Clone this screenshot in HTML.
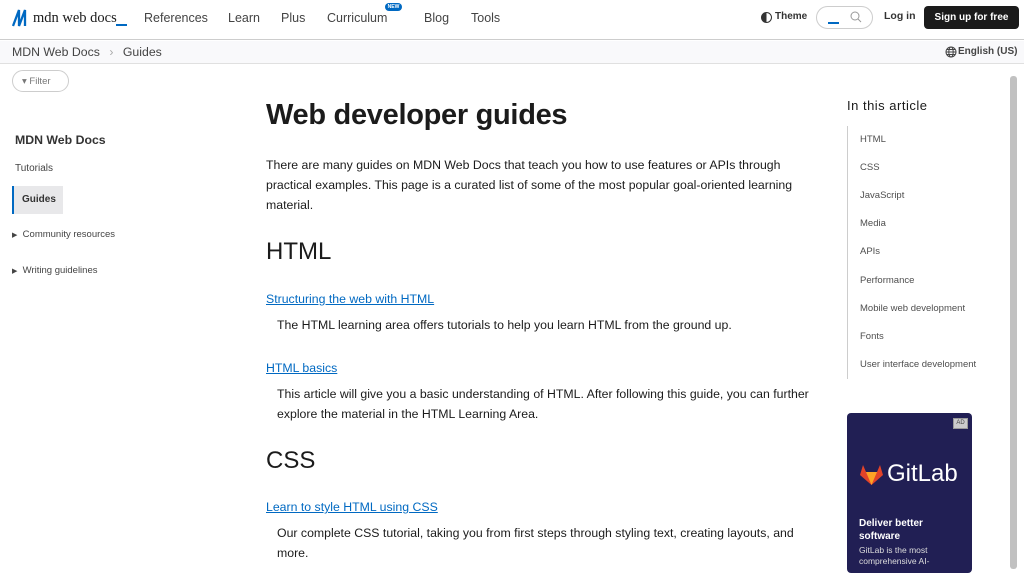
<!DOCTYPE html>
<html><head><meta charset="utf-8"><style>
*{box-sizing:border-box;margin:0;padding:0}
body{width:1024px;height:569px;overflow:hidden;background:#fff;font-family:"Liberation Sans",sans-serif;color:#1b1b1b;position:relative}
.a{position:absolute;white-space:nowrap}
.hdr{position:absolute;left:0;top:0;width:1024px;height:40px;border-bottom:1px solid #cdcdcd;background:#fff}
.nav{font-size:12.5px;color:#444;top:11px}
.bc{position:absolute;left:0;top:41px;width:1024px;height:23px;background:#f9f9fb;border-bottom:1px solid #e0e0e0}
p.t{font-size:12.3px;line-height:20px;color:#1b1b1b}
a.l{color:#0069c2;text-decoration:underline;font-size:12.3px}
.toc{font-size:9.5px;color:#4e4e4e;left:860px}
</style></head><body>
<div class="hdr"></div>
<svg class="a" style="left:12px;top:9px" width="18" height="18" viewBox="0 0 18 18"><path d="M1 17 L7 1 L7 17 L13 1 L13 17" stroke="#0069c2" stroke-width="2.3" fill="none"/></svg>
<div class="a" style="left:33px;top:10px;font-size:14.5px;font-family:'Liberation Serif',serif;color:#1b1b1b">mdn web docs</div>
<div class="a" style="left:116px;top:24px;width:11px;height:2px;background:#0069c2"></div>
<div class="a nav" style="left:144px">References</div>
<div class="a nav" style="left:228px">Learn</div>
<div class="a nav" style="left:281px">Plus</div>
<div class="a nav" style="left:327px">Curriculum</div>
<div class="a" style="left:385px;top:3px;width:17px;height:8px;border-radius:4px;background:#0069c2;color:#fff;font-size:5px;font-weight:bold;text-align:center;line-height:8px">NEW</div>
<div class="a nav" style="left:424px">Blog</div>
<div class="a nav" style="left:471px">Tools</div>
<div class="a" style="left:761px;top:12px;width:11px;height:11px;border-radius:50%;border:1.5px solid #333;background:linear-gradient(90deg,#333 50%,#fff 50%)"></div>
<div class="a" style="left:775px;top:11px;font-size:10px;font-weight:bold;color:#333">Theme</div>
<div class="a" style="left:816px;top:6px;width:57px;height:23px;border:1px solid #cdcdcd;border-radius:12px"></div>
<div class="a" style="left:828px;top:22px;width:11px;height:2px;background:#0069c2"></div>
<svg class="a" style="left:850px;top:11px" width="12" height="12" viewBox="0 0 12 12"><circle cx="5" cy="5" r="4" stroke="#999" fill="none"/><path d="M8 8 L11 11" stroke="#999"/></svg>
<div class="a" style="left:884px;top:10px;font-size:10.5px;font-weight:bold;color:#333">Log in</div>
<div class="a" style="left:924px;top:6px;width:95px;height:23px;background:#1b1b1b;border-radius:4px;color:#fff;font-size:10px;font-weight:bold;text-align:center;line-height:23px">Sign up for free</div>
<div class="bc"></div>
<div class="a" style="left:12px;top:45px;font-size:12.3px;color:#444">MDN Web Docs <span style="color:#aaa;margin:0 6px">›</span> Guides</div>
<svg class="a" style="left:945px;top:46px" width="12" height="12" viewBox="0 0 12 12" fill="none" stroke="#444"><circle cx="6" cy="6" r="5"/><ellipse cx="6" cy="6" rx="2.2" ry="5"/><path d="M1 6H11M2 3.5H10M2 8.5H10"/></svg>
<div class="a" style="left:958px;top:46px;font-size:10px;font-weight:bold;color:#444">English (US)</div>
<div class="a" style="left:12px;top:70px;width:57px;height:22px;border:1px solid #cdcdcd;border-radius:11px;font-size:9.5px;color:#777;padding:5px 0 0 9px">▾ Filter</div>
<div class="a" style="left:15px;top:133px;font-size:12.3px;font-weight:bold;color:#333">MDN Web Docs</div>
<div class="a" style="left:15px;top:163px;font-size:10px;color:#444">Tutorials</div>
<div class="a" style="left:12px;top:186px;width:51px;height:28px;background:#e8e8ea;border-left:2px solid #0069c2"></div>
<div class="a" style="left:22px;top:194px;font-size:10px;font-weight:bold;color:#333">Guides</div>
<div class="a" style="left:12px;top:229px;font-size:9.5px;color:#444"><span style="font-size:7px">▶</span>&nbsp; Community resources</div>
<div class="a" style="left:12px;top:265px;font-size:9.5px;color:#444"><span style="font-size:7px">▶</span>&nbsp; Writing guidelines</div>
<div class="a" style="left:266px;top:99px;font-size:29px;font-weight:bold;color:#1b1b1b;letter-spacing:-0.3px">Web developer guides</div>
<p class="t a" style="left:266px;top:155px;white-space:normal;width:540px">There are many guides on MDN Web Docs that teach you how to use features or APIs through practical examples. This page is a curated list of some of the most popular goal-oriented learning material.</p>
<div class="a" style="left:266px;top:238px;font-size:24px;color:#1b1b1b">HTML</div>
<a class="l a" style="left:266px;top:292px">Structuring the web with HTML</a>
<p class="t a" style="left:277px;top:315px">The HTML learning area offers tutorials to help you learn HTML from the ground up.</p>
<a class="l a" style="left:266px;top:361px">HTML basics</a>
<p class="t a" style="left:277px;top:384px;white-space:normal;width:540px">This article will give you a basic understanding of HTML. After following this guide, you can further explore the material in the HTML Learning Area.</p>
<div class="a" style="left:266px;top:447px;font-size:24px;color:#1b1b1b">CSS</div>
<a class="l a" style="left:266px;top:500px">Learn to style HTML using CSS</a>
<p class="t a" style="left:277px;top:523px;white-space:normal;width:535px">Our complete CSS tutorial, taking you from first steps through styling text, creating layouts, and more.</p>
<div class="a" style="left:847px;top:98px;font-size:13px;color:#1b1b1b;letter-spacing:0.5px">In this article</div>
<div class="a" style="left:847px;top:126px;width:1px;height:253px;background:#cdcdcd"></div>
<div class="a toc" style="top:134px">HTML</div>
<div class="a toc" style="top:162px">CSS</div>
<div class="a toc" style="top:190px">JavaScript</div>
<div class="a toc" style="top:218px">Media</div>
<div class="a toc" style="top:246px">APIs</div>
<div class="a toc" style="top:275px">Performance</div>
<div class="a toc" style="top:303px">Mobile web development</div>
<div class="a toc" style="top:331px">Fonts</div>
<div class="a toc" style="top:359px">User interface development</div>
<div class="a" style="left:847px;top:413px;width:125px;height:160px;background:#211f54;border-radius:4px"></div>
<div class="a" style="left:953px;top:418px;width:15px;height:11px;background:#ccc;border:1px solid #999;font-size:6px;color:#444;text-align:center;line-height:9px">AD</div>
<svg class="a" style="left:860px;top:464px" width="23" height="21" viewBox="0 0 23 21"><path d="M11.5 21 L0 11 L3 1 L6 8 H17 L20 1 L23 11 Z" fill="#e24329"/><path d="M11.5 21 L6 8 H17 Z" fill="#fca326"/></svg>
<div class="a" style="left:887px;top:460px;font-size:24px;color:#fff">GitLab</div>
<div class="a" style="left:859px;top:517px;font-size:10px;font-weight:bold;color:#fff;line-height:13px">Deliver better<br>software</div>
<div class="a" style="left:859px;top:545px;font-size:8.5px;color:#ddd;line-height:11px">GitLab is the most<br>comprehensive AI-</div>
<div class="a" style="left:1010px;top:76px;width:7px;height:493px;background:#c1c1c1;border-radius:3px"></div>
</body></html>
